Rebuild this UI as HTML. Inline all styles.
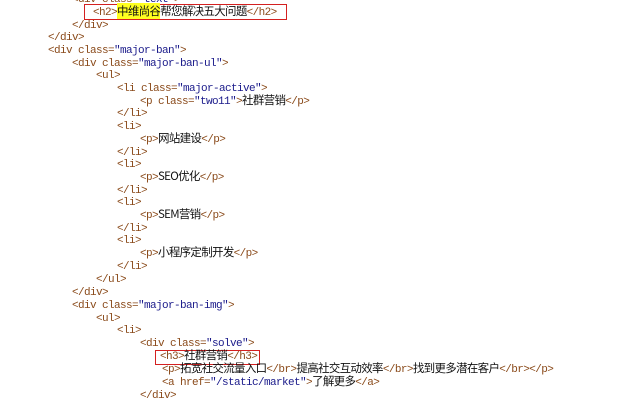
<!DOCTYPE html>
<html><head><meta charset="utf-8"><style>
body{margin:0;width:640px;height:404px;background:#fff;overflow:hidden;position:relative;font-family:"Liberation Mono","Noto Sans CJK SC",monospace;font-size:11px;letter-spacing:-0.6px;}
.l{position:absolute;white-space:nowrap;height:13px;line-height:13px;color:#000;}
.l span{vertical-align:top;line-height:13px;display:inline-block;height:13px}
.t{color:#8a4a1a}
.v{color:#1a1a8a}
.l span.c{font-family:"Noto Sans CJK SC","WenQuanYi Zen Hei",sans-serif;font-size:11.5px;color:#111;letter-spacing:-0.7px;position:relative;top:-2px}
.box{position:absolute;border:1.5px solid #d42020;}
.l span.hl{background:#ffff20;display:inline;position:static}
</style></head><body>
<div class="l" style="top:-6px;left:72px"><span class="t">&lt;div class=</span><span class="v">"text"</span><span class="t">&gt;</span></div>
<div class="box" style="left:84px;top:4px;width:201px;height:14px"></div>
<div class="l" style="top:7px;left:93px"><span class="t">&lt;h2&gt;</span><span class="c"><span class="hl">中维尚谷</span>帮您解决五大问题</span><span class="t">&lt;/h2&gt;</span></div>
<div class="l" style="top:20px;left:72px"><span class="t">&lt;/div&gt;</span></div>
<div class="l" style="top:32px;left:48px"><span class="t">&lt;/div&gt;</span></div>
<div class="l" style="top:45px;left:48px"><span class="t">&lt;div class=</span><span class="v">"major-ban"</span><span class="t">&gt;</span></div>
<div class="l" style="top:58px;left:72px"><span class="t">&lt;div class=</span><span class="v">"major-ban-ul"</span><span class="t">&gt;</span></div>
<div class="l" style="top:70px;left:96px"><span class="t">&lt;ul&gt;</span></div>
<div class="l" style="top:83px;left:117px"><span class="t">&lt;li class=</span><span class="v">"major-active"</span><span class="t">&gt;</span></div>
<div class="l" style="top:96px;left:140px"><span class="t">&lt;p class=</span><span class="v">"two11"</span><span class="t">&gt;</span><span class="c">社群营销</span><span class="t">&lt;/p&gt;</span></div>
<div class="l" style="top:108px;left:117px"><span class="t">&lt;/li&gt;</span></div>
<div class="l" style="top:121px;left:117px"><span class="t">&lt;li&gt;</span></div>
<div class="l" style="top:134px;left:140px"><span class="t">&lt;p&gt;</span><span class="c">网站建设</span><span class="t">&lt;/p&gt;</span></div>
<div class="l" style="top:147px;left:117px"><span class="t">&lt;/li&gt;</span></div>
<div class="l" style="top:159px;left:117px"><span class="t">&lt;li&gt;</span></div>
<div class="l" style="top:172px;left:140px"><span class="t">&lt;p&gt;</span><span class="c">SEO优化</span><span class="t">&lt;/p&gt;</span></div>
<div class="l" style="top:185px;left:117px"><span class="t">&lt;/li&gt;</span></div>
<div class="l" style="top:197px;left:117px"><span class="t">&lt;li&gt;</span></div>
<div class="l" style="top:210px;left:140px"><span class="t">&lt;p&gt;</span><span class="c">SEM营销</span><span class="t">&lt;/p&gt;</span></div>
<div class="l" style="top:223px;left:117px"><span class="t">&lt;/li&gt;</span></div>
<div class="l" style="top:235px;left:117px"><span class="t">&lt;li&gt;</span></div>
<div class="l" style="top:248px;left:140px"><span class="t">&lt;p&gt;</span><span class="c">小程序定制开发</span><span class="t">&lt;/p&gt;</span></div>
<div class="l" style="top:261px;left:117px"><span class="t">&lt;/li&gt;</span></div>
<div class="l" style="top:274px;left:96px"><span class="t">&lt;/ul&gt;</span></div>
<div class="l" style="top:287px;left:72px"><span class="t">&lt;/div&gt;</span></div>
<div class="l" style="top:300px;left:72px"><span class="t">&lt;div class=</span><span class="v">"major-ban-img"</span><span class="t">&gt;</span></div>
<div class="l" style="top:313px;left:96px"><span class="t">&lt;ul&gt;</span></div>
<div class="l" style="top:325px;left:117px"><span class="t">&lt;li&gt;</span></div>
<div class="l" style="top:338px;left:140px"><span class="t">&lt;div class=</span><span class="v">"solve"</span><span class="t">&gt;</span></div>
<div class="box" style="left:155px;top:350px;width:103px;height:13px"></div>
<div class="l" style="top:351px;left:160px"><span class="t">&lt;h3&gt;</span><span class="c">社群营销</span><span class="t">&lt;/h3&gt;</span></div>
<div class="l" style="top:364px;left:162px"><span class="t">&lt;p&gt;</span><span class="c">拓宽社交流量入口</span><span class="t">&lt;/br&gt;</span><span class="c">提高社交互动效率</span><span class="t">&lt;/br&gt;</span><span class="c">找到更多潜在客户</span><span class="t">&lt;/br&gt;&lt;/p&gt;</span></div>
<div class="l" style="top:377px;left:162px"><span class="t">&lt;a href=</span><span class="v">"/static/market"</span><span class="t">&gt;</span><span class="c">了解更多</span><span class="t">&lt;/a&gt;</span></div>
<div class="l" style="top:390px;left:140px"><span class="t">&lt;/div&gt;</span></div>
</body></html>
